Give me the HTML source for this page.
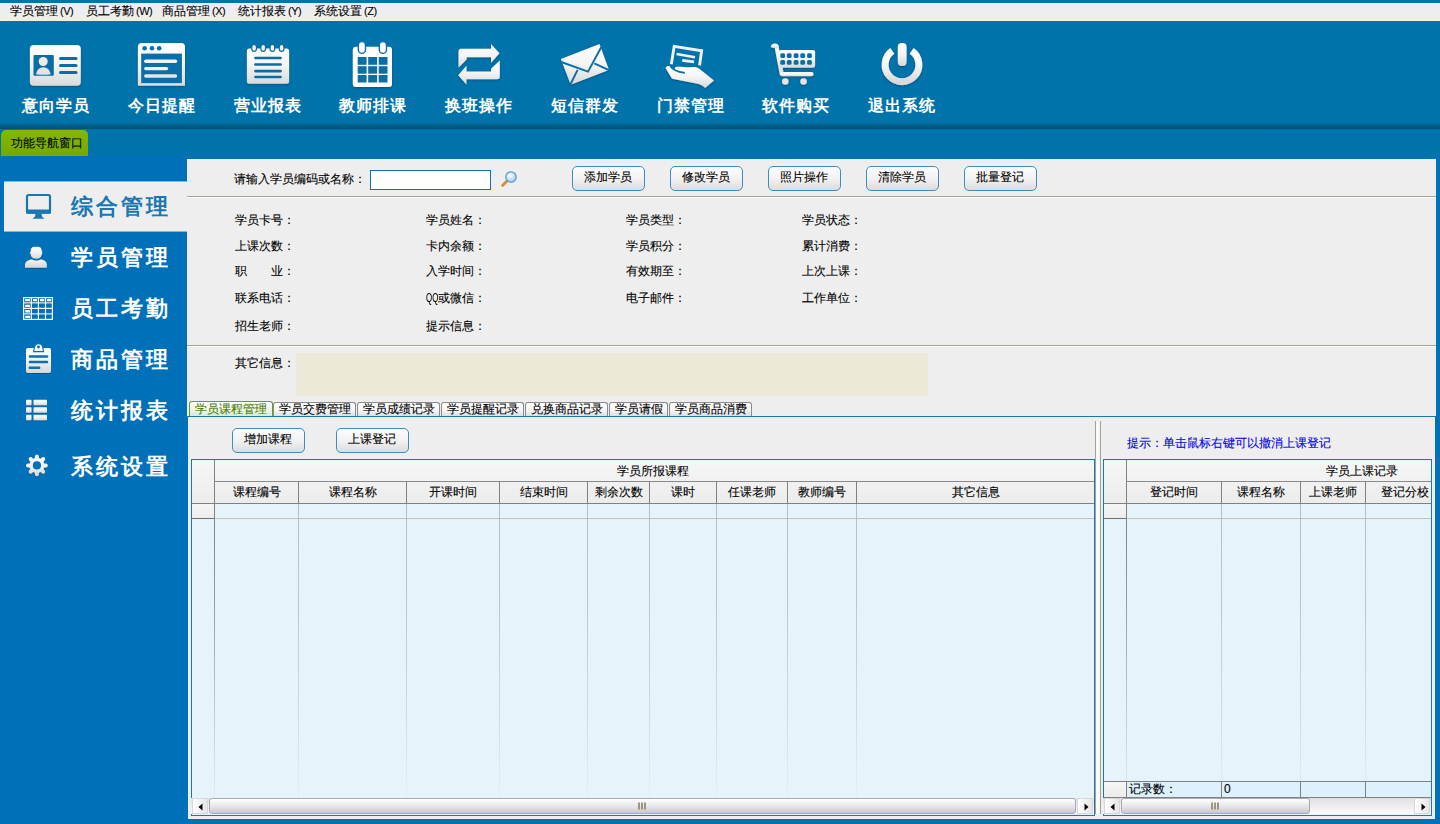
<!DOCTYPE html>
<html><head><meta charset="utf-8">
<style>
*{margin:0;padding:0;box-sizing:border-box}
html,body{width:1440px;height:824px;overflow:hidden}
body{position:relative;background:#0070b9;font-family:"Liberation Sans",sans-serif;font-size:12px;color:#000}
.a{position:absolute}
.t{position:absolute;white-space:nowrap;font-size:12px;line-height:12px;-webkit-text-stroke:0.1px currentColor}
#topbar{left:0;top:0;width:1440px;height:156px;background:#0073ab}
#menu{left:0;top:3px;width:1440px;height:18px;background:#eeeeee}
#shadow{left:0;top:122px;width:1440px;height:7px;background:linear-gradient(#0073ab 0px,#00628f 3px,#004e78 7px)}
.tb{position:absolute;top:0;height:124px}
.tbl{position:absolute;top:98px;white-space:nowrap;color:#fff;font-weight:bold;font-size:16px;line-height:16px;letter-spacing:1px}
#navtab{left:1px;top:130px;width:87px;height:26px;border-radius:5px 5px 0 0;background:linear-gradient(#82b900,#76a800)}
#content{left:187px;top:159px;width:1249px;height:660px;background:#eeeeee}
.sep{position:absolute;left:187px;width:1249px;height:2px;border-top:1px solid #a9a48f;border-bottom:1px solid #fff}
.btn{-webkit-text-stroke:0.1px #000;position:absolute;height:25px;border:1px solid #3b8ec2;border-radius:5px;background:linear-gradient(#fdfdfd,#f2f2f2 50%,#dcdcdc);text-align:center;line-height:20px;font-size:12px;text-indent:-2px}
.side{position:absolute;left:0;width:187px;height:51px}
.slbl{position:absolute;left:71px;white-space:nowrap;color:#fff;font-weight:bold;font-size:22px;line-height:22px;letter-spacing:3px}
.tab{-webkit-text-stroke:0.1px currentColor;position:absolute;top:402px;height:14px;border:1px solid #8c8c8c;border-bottom:none;border-radius:3px 3px 0 0;background:linear-gradient(#ffffff,#f4f4f4 60%,#dedede);font-size:12px;line-height:13px;text-align:center;white-space:nowrap}
.tab.act{top:401px;height:15px;border-color:#6a9a1e;color:#4b7a00;background:linear-gradient(#ffffff,#f0f8ec 50%,#d8ecd0);line-height:14px}
.hdr{background:linear-gradient(#f6f6f6,#ececec)}
.sb{background:linear-gradient(#e0e0e0,#f0f0f0 60%,#fafafa)}
.sbtn{background:linear-gradient(90deg,#ffffff,#e6e6e6);border:1px solid #d8d8d8}
.thumb{border:1px solid #a8a8b8;border-radius:3px;background:linear-gradient(#ffffff,#ececf0 40%,#c8c8d6)}
</style></head><body>
<div id="topbar" class="a"></div>
<div id="menu" class="a">
  <span class="t" style="left:10px;top:2px">学员管理<span style="margin-left:2px;font-size:11px;letter-spacing:-0.5px">(V)</span></span>
  <span class="t" style="left:86px;top:2px">员工考勤<span style="margin-left:2px;font-size:11px;letter-spacing:-0.5px">(W)</span></span>
  <span class="t" style="left:162px;top:2px">商品管理<span style="margin-left:2px;font-size:11px;letter-spacing:-0.5px">(X)</span></span>
  <span class="t" style="left:238px;top:2px">统计报表<span style="margin-left:2px;font-size:11px;letter-spacing:-0.5px">(Y)</span></span>
  <span class="t" style="left:314px;top:2px">系统设置<span style="margin-left:2px;font-size:11px;letter-spacing:-0.5px">(Z)</span></span>
</div>
<div id="shadow" class="a"></div>
<div id="navtab" class="a"><span class="t" style="left:10px;top:7px">功能导航窗口</span></div>

<svg class="a" style="left:0;top:0" width="1440" height="130">
<defs>
<linearGradient id="g1" x1="0" y1="0" x2="0" y2="1"><stop offset="0" stop-color="#ffffff"/><stop offset="0.5" stop-color="#f4f4f4"/><stop offset="1" stop-color="#d9d9d9"/></linearGradient>
<filter id="sh" x="-20%" y="-20%" width="140%" height="140%"><feDropShadow dx="0" dy="1" stdDeviation="0.8" flood-color="#003a5a" flood-opacity="0.6"/></filter>
</defs>
<g filter="url(#sh)">
<!-- ID card -->
<rect x="29.9" y="44.9" width="50.9" height="40.9" rx="3.8" fill="url(#g1)"/>
<!-- browser -->
<path d="M137.9,85.8 L137.9,47 Q137.9,42.9 142,42.9 L181,42.9 Q185,42.9 185,47 L185,85.8 Z" fill="url(#g1)"/>
<!-- notepad -->
<rect x="246.9" y="48.5" width="42.2" height="35.3" rx="2.5" fill="url(#g1)"/>
<!-- calendar -->
<rect x="352.8" y="46.8" width="39.2" height="40.2" rx="3" fill="#ffffff"/>
<!-- swap -->
<path d="M458.5,67.8 L458.5,51.3 Q458.5,48.8 461,48.8 L491,48.8 L491,43.9 L499.5,53.3 L491,62.9 L491,57.3 L466.7,57.3 L466.7,59.6 Z" fill="url(#g1)"/>
<path d="M499.8,60.6 L499.8,76.8 Q499.8,79.3 497.2,79.3 L466.5,79.3 L466.5,84.8 L458.2,75.3 L466.5,65.8 L466.5,71.4 L491,71.4 L491,68.8 Z" fill="url(#g1)"/>
<!-- envelope -->
<path d="M560.9,59 L599.5,43.9 L609,70.1 L570.7,84.8 Z" fill="url(#g1)"/>
<!-- hand -->
<path d="M665.5,68 C667,65.5 669.5,65.6 671.2,67.3 L675.2,66.9 C680,66.3 688,67.8 692,67.1 C695,66.6 697,67 699,68.5 L714,80.5 L705.2,88 C702.5,85.2 699.5,84 696,83.5 L672,78.8 Z" fill="url(#g1)"/>
<!-- cart -->
<path d="M774.2,45 L778.4,45 L784,75 L779.8,75 Z" fill="url(#g1)"/>
<path d="M770.8,47.2 C770.6,43.6 775,42.4 777.8,44.3 L778.6,48.2 L773.5,48 Z" fill="url(#g1)"/>
<rect x="779.1" y="50.1" width="36" height="17.7" rx="2" fill="url(#g1)"/>
<rect x="780" y="72" width="33.5" height="4.3" rx="2" fill="url(#g1)"/>
<circle cx="785.3" cy="81.5" r="3.3" fill="#e8e4e0"/>
<circle cx="803.6" cy="81.5" r="3.3" fill="#e8e4e0"/>
<!-- power -->
<path d="M892.3,50.9 A16.9,16.9 0 1 0 911.7,50.9" fill="none" stroke="url(#g1)" stroke-width="7"/>
<rect x="897.8" y="43" width="8.8" height="23" rx="4" fill="url(#g1)"/>
</g>
<!-- ID card details -->
<rect x="33.5" y="54.9" width="20.3" height="20.9" rx="1" fill="#0a6ea5"/>
<circle cx="43.2" cy="61.5" r="4.5" fill="#ececec"/>
<path d="M36,74.2 Q37.5,67.3 43.3,67.3 Q49,67.3 50.8,74.2 Q43.3,75.2 36,74.2 Z" fill="#e4e4e4"/>
<g stroke="#0a6ea5" stroke-width="3" stroke-linecap="round">
<line x1="60.5" y1="58.5" x2="76" y2="58.5"/><line x1="60.5" y1="65.5" x2="76" y2="65.5"/><line x1="60.5" y1="72.5" x2="76" y2="72.5"/>
</g>
<!-- browser details -->
<rect x="141.2" y="53.6" width="40.7" height="29.5" fill="#0a6fa6"/>
<circle cx="144.6" cy="48.2" r="2.3" fill="#0a6fa6"/><circle cx="152" cy="48.2" r="2.3" fill="#0a6fa6"/><circle cx="159.2" cy="48.2" r="2.3" fill="#0a6fa6"/>
<g stroke="#f2f2f2" stroke-width="3.4" stroke-linecap="round">
<line x1="145.8" y1="61.2" x2="175.5" y2="61.2"/><line x1="145.8" y1="68.6" x2="166.5" y2="68.6"/><line x1="145.8" y1="76" x2="175.5" y2="76" stroke="#e6e6e6"/>
</g>
<!-- notepad details -->
<g fill="#f6f6f6" stroke="#0a6ea5" stroke-width="1.2">
<rect x="251.8" y="44.4" width="4.6" height="7" rx="2.3"/><rect x="260.9" y="44.4" width="4.6" height="7" rx="2.3"/><rect x="270.1" y="44.4" width="4.6" height="7" rx="2.3"/><rect x="279.3" y="44.4" width="4.6" height="7" rx="2.3"/>
</g>
<g stroke="#0a6ea5" stroke-width="2.6" stroke-linecap="round">
<line x1="255.4" y1="58" x2="280.6" y2="58"/><line x1="255.4" y1="64.5" x2="280.6" y2="64.5"/><line x1="255.4" y1="71.1" x2="280.6" y2="71.1"/><line x1="255.4" y1="77" x2="280.6" y2="77"/>
</g>
<!-- calendar details -->
<g fill="#0a6fa6">
<rect x="357.7" y="57" width="8.9" height="7.8"/><rect x="368.2" y="57" width="8.9" height="7.8"/><rect x="378.7" y="57" width="8.8" height="7.8"/>
<rect x="357.7" y="66.2" width="8.9" height="7.5"/><rect x="368.2" y="66.2" width="8.9" height="7.5"/><rect x="378.7" y="66.2" width="8.8" height="7.5"/>
<rect x="357.7" y="75" width="8.9" height="7.5"/><rect x="368.2" y="75" width="8.9" height="7.5"/><rect x="378.7" y="75" width="8.8" height="7.5"/>
</g>
<g fill="#ffffff" stroke="#0a6fa6" stroke-width="1.4">
<rect x="358.3" y="41.6" width="7.2" height="11.8" rx="3.6"/><rect x="379.3" y="41.6" width="7.2" height="11.8" rx="3.6"/>
</g>
<!-- envelope lines -->
<g stroke="#0a6fa6" stroke-width="1.9" fill="none" stroke-linejoin="miter">
<path d="M561.2,62 L588,71.6 L601.2,47.2"/>
<path d="M577.6,69.8 L570.2,85"/>
<path d="M594.3,63.3 L609.5,70.3"/>
</g>
<!-- hand card -->
<path d="M671.3,64.2 L674.2,46.3 L701.6,50.8 L699.6,65.4" fill="none" stroke="#f2f2f2" stroke-width="2.9" stroke-linejoin="miter"/>
<g stroke="#f2f2f2" stroke-linecap="butt">
<line x1="676.6" y1="54" x2="695" y2="57.2" stroke-width="2.4"/>
<line x1="682.2" y1="60.3" x2="694" y2="61.9" stroke-width="2.8"/>
</g>
<path d="M670.6,66.4 Q673.2,71.2 684.8,72.9" fill="none" stroke="#0a6fa6" stroke-width="1.9"/><path d="M669.6,65.6 L676,66.2 L674.2,69.6 Z" fill="#0a6fa6"/>
<!-- cart holes -->
<g fill="#0a6fa6">
<rect x="780.3" y="53.2" width="4.8" height="4.7" rx="1.5"/><rect x="786.8" y="53.2" width="4.8" height="4.7" rx="1.5"/><rect x="793.7" y="53.2" width="4.8" height="4.7" rx="1.5"/><rect x="800.3" y="53.2" width="4.8" height="4.7" rx="1.5"/><rect x="807.1" y="53.2" width="4.8" height="4.7" rx="1.5"/><rect x="780.3" y="60.1" width="4.8" height="4.7" rx="1.5"/><rect x="786.8" y="60.1" width="4.8" height="4.7" rx="1.5"/><rect x="793.7" y="60.1" width="4.8" height="4.7" rx="1.5"/><rect x="800.3" y="60.1" width="4.8" height="4.7" rx="1.5"/><rect x="807.1" y="60.1" width="4.8" height="4.7" rx="1.5"/>
</g>
</svg>
<!-- toolbar labels -->
<span class="tbl" style="left:22px">意向学员</span>
<span class="tbl" style="left:128px">今日提醒</span>
<span class="tbl" style="left:234px">营业报表</span>
<span class="tbl" style="left:339px">教师排课</span>
<span class="tbl" style="left:445px">换班操作</span>
<span class="tbl" style="left:551px">短信群发</span>
<span class="tbl" style="left:657px">门禁管理</span>
<span class="tbl" style="left:762px">软件购买</span>
<span class="tbl" style="left:868px">退出系统</span>

<div id="content" class="a"></div>

<!-- sidebar -->
<div class="side" style="top:181px;left:4px;width:183px;height:51px;background:#eeeeee;border-top:1px solid #b8ab8a;border-bottom:1px solid #b8ab8a"></div>

<svg class="a" style="left:0;top:156px" width="187" height="340">
<defs>
<linearGradient id="g2" x1="0" y1="0" x2="0" y2="1"><stop offset="0" stop-color="#ffffff"/><stop offset="0.5" stop-color="#f2f2f2"/><stop offset="1" stop-color="#d6d6d6"/></linearGradient>
<linearGradient id="g3" gradientUnits="userSpaceOnUse" x1="0" y1="-11" x2="0" y2="11"><stop offset="0" stop-color="#ffffff"/><stop offset="0.5" stop-color="#f0f0f0"/><stop offset="1" stop-color="#d8d8d8"/></linearGradient>
<linearGradient id="g4" x1="0" y1="0" x2="0" y2="1"><stop offset="0" stop-color="#f6f6f6"/><stop offset="1" stop-color="#d4d4d4"/></linearGradient>
<filter id="sh2" x="-20%" y="-20%" width="140%" height="140%"><feDropShadow dx="0" dy="1" stdDeviation="0.6" flood-color="#003a5a" flood-opacity="0.5"/></filter>
</defs>
<g transform="translate(0,-156)">
<!-- monitor -->
<rect x="27" y="195" width="23" height="17.6" rx="1.5" fill="none" stroke="#1a77b0" stroke-width="2.2"/>
<rect x="26" y="209.5" width="25" height="4.2" rx="1" fill="#1a77b0"/>
<path d="M35.5,213.5 L41.5,213.5 L42,216.5 L44.5,218.8 L32.5,218.8 L35,216.5 Z" fill="#1a77b0"/>
<g filter="url(#sh2)">
<!-- person -->

<path d="M25,267.8 L25,264.2 Q25.4,261.6 28,260.6 L31.4,259.3 Q36.2,262.2 41.2,259.3 L44.2,260.6 Q46.8,261.7 46.8,264.2 L46.8,267.8 Z" fill="url(#g4)"/><path d="M30.5,249.2 Q31,246.2 36.2,246.2 Q41.4,246.2 41.9,249.2 L42.3,251.5 Q43.3,252.8 42.3,254.2 Q41.5,259.2 36.2,259.2 Q30.9,259.2 30.1,254.2 Q29.1,252.8 30.1,251.5 Z" fill="url(#g2)" stroke="#0070b9" stroke-width="0.9"/>
<!-- clipboard -->
<rect x="26" y="348" width="25" height="25" rx="2" fill="url(#g2)"/>
<!-- list -->
<rect x="26" y="399.7" width="5.5" height="5.5" rx="0.8" fill="url(#g2)"/>
<rect x="26" y="407.2" width="5.5" height="5.5" rx="0.8" fill="url(#g2)"/>
<rect x="26" y="414.7" width="5.5" height="5.5" rx="0.8" fill="url(#g2)"/>
<rect x="33.5" y="399.7" width="13.5" height="5.5" rx="0.8" fill="url(#g2)"/>
<rect x="33.5" y="407.2" width="13.5" height="5.5" rx="0.8" fill="url(#g2)"/>
<rect x="33.5" y="414.7" width="13.5" height="5.5" rx="0.8" fill="url(#g2)"/>
<!-- gear -->
<path d="M29.20,465.40 A7.7,7.7 0 1 1 44.60,465.40 A7.7,7.7 0 1 1 29.20,465.40 Z M34.90,460.40 L34.90,456.50 L38.90,456.50 L38.90,460.40 Z M34.90,456.50 A2.0,2.0 0 1 1 38.90,456.50 A2.0,2.0 0 1 1 34.90,456.50 Z M39.02,460.45 L41.78,457.69 L44.61,460.52 L41.85,463.28 Z M41.19,459.11 A2.0,2.0 0 1 1 45.19,459.11 A2.0,2.0 0 1 1 41.19,459.11 Z M41.90,463.40 L45.80,463.40 L45.80,467.40 L41.90,467.40 Z M43.80,465.40 A2.0,2.0 0 1 1 47.80,465.40 A2.0,2.0 0 1 1 43.80,465.40 Z M41.85,467.52 L44.61,470.28 L41.78,473.11 L39.02,470.35 Z M41.19,471.69 A2.0,2.0 0 1 1 45.19,471.69 A2.0,2.0 0 1 1 41.19,471.69 Z M38.90,470.40 L38.90,474.30 L34.90,474.30 L34.90,470.40 Z M34.90,474.30 A2.0,2.0 0 1 1 38.90,474.30 A2.0,2.0 0 1 1 34.90,474.30 Z M34.78,470.35 L32.02,473.11 L29.19,470.28 L31.95,467.52 Z M28.61,471.69 A2.0,2.0 0 1 1 32.61,471.69 A2.0,2.0 0 1 1 28.61,471.69 Z M31.90,467.40 L28.00,467.40 L28.00,463.40 L31.90,463.40 Z M26.00,465.40 A2.0,2.0 0 1 1 30.00,465.40 A2.0,2.0 0 1 1 26.00,465.40 Z M31.95,463.28 L29.19,460.52 L32.02,457.69 L34.78,460.45 Z M28.61,459.11 A2.0,2.0 0 1 1 32.61,459.11 A2.0,2.0 0 1 1 28.61,459.11 Z" fill="url(#g2)"/>
</g>
<!-- clipboard details -->
<path d="M33.6,351.6 L34.6,346.6 Q35.3,343.8 38.6,343.8 Q41.9,343.8 42.6,346.6 L43.6,351.6 Z" fill="#f6f6f6" stroke="#0a6fb5" stroke-width="1.1"/>
<circle cx="38.5" cy="347" r="1.4" fill="#0a6fb5"/>
<g stroke="#0a6fb5" stroke-width="2.5" stroke-linecap="round">
<line x1="30" y1="356.5" x2="47" y2="356.5"/><line x1="30" y1="362" x2="47" y2="362"/><line x1="29.8" y1="367.8" x2="39.2" y2="367.8"/>
</g>
<circle cx="36.9" cy="465.4" r="4.1" fill="#0070b9"/>
<!-- table grid -->
<g fill="#a9cbe0">
<rect x="23.6" y="302" width="28.8" height="1.6"/><rect x="23.6" y="313" width="28.8" height="1.6"/>
</g>
<g fill="none" stroke="#ffffff" stroke-width="1.2">
<rect x="23.6" y="297.6" width="28.8" height="21.8"/>
<line x1="31.3" y1="297.6" x2="31.3" y2="319.4"/><line x1="38.4" y1="297.6" x2="38.4" y2="319.4"/><line x1="45.5" y1="297.6" x2="45.5" y2="319.4"/>
<line x1="23.6" y1="308.4" x2="52.4" y2="308.4"/>
</g>
<g fill="#ffffff">
<rect x="25.2" y="299" width="4.8" height="2.3" rx="0.5"/><rect x="33" y="299" width="4" height="2.3" rx="0.5"/><rect x="40" y="299" width="4.2" height="2.3" rx="0.5"/><rect x="47" y="299" width="4" height="2.3" rx="0.5"/>
<rect x="25.2" y="304.8" width="4.8" height="2.3" rx="0.5"/>
<rect x="25.2" y="310.1" width="4.8" height="2.3" rx="0.5"/><rect x="25.2" y="315.8" width="4.8" height="2.3" rx="0.5"/>
</g>
</g>
</svg>
<span class="slbl" style="top:196px;color:#1a77b0">综合管理</span>
<span class="slbl" style="top:247px">学员管理</span>
<span class="slbl" style="top:298px">员工考勤</span>
<span class="slbl" style="top:349px">商品管理</span>
<span class="slbl" style="top:400px">统计报表</span>
<span class="slbl" style="top:456px">系统设置</span>

<!-- search row -->
<span class="t" style="left:234px;top:173px">请输入学员编码或名称：</span>
<div class="a" style="left:370px;top:170px;width:121px;height:20px;background:#fff;border:1px solid #0b72aa"></div>
<div class="btn" style="left:572px;top:166px;width:73px">添加学员</div>
<div class="btn" style="left:670px;top:166px;width:73px">修改学员</div>
<div class="btn" style="left:768px;top:166px;width:73px">照片操作</div>
<div class="btn" style="left:866px;top:166px;width:73px">清除学员</div>
<div class="btn" style="left:964px;top:166px;width:73px">批量登记</div>
<div class="sep" style="top:196px"></div>


<!-- info -->
<span class="t" style="left:235px;top:214px">学员卡号：</span>
<span class="t" style="left:426px;top:214px">学员姓名：</span>
<span class="t" style="left:626px;top:214px">学员类型：</span>
<span class="t" style="left:802px;top:214px">学员状态：</span>
<span class="t" style="left:235px;top:240px">上课次数：</span>
<span class="t" style="left:426px;top:240px">卡内余额：</span>
<span class="t" style="left:626px;top:240px">学员积分：</span>
<span class="t" style="left:802px;top:240px">累计消费：</span>
<span class="t" style="left:235px;top:265px">职&#12288;&#12288;业：</span>
<span class="t" style="left:426px;top:265px">入学时间：</span>
<span class="t" style="left:626px;top:265px">有效期至：</span>
<span class="t" style="left:802px;top:265px">上次上课：</span>
<span class="t" style="left:235px;top:292px">联系电话：</span>
<span class="t" style="left:426px;top:292px"><span style="display:inline-block;width:12px;transform:scaleX(0.66);transform-origin:0 0">QQ</span>或微信：</span>
<span class="t" style="left:626px;top:292px">电子邮件：</span>
<span class="t" style="left:802px;top:292px">工作单位：</span>
<span class="t" style="left:235px;top:320px">招生老师：</span>
<span class="t" style="left:426px;top:320px">提示信息：</span>
<div class="sep" style="top:345px"></div>
<span class="t" style="left:235px;top:357px">其它信息：</span>
<div class="a" style="left:296px;top:353px;width:632px;height:43px;background:#ece9d8"></div>
<svg class="a" style="left:498px;top:168px" width="22" height="22">
<defs><radialGradient id="lens" cx="0.4" cy="0.35" r="0.7"><stop offset="0" stop-color="#ffffff"/><stop offset="1" stop-color="#9cc8ee"/></radialGradient></defs>
<line x1="4.5" y1="17.5" x2="9.5" y2="12.5" stroke="#d9892a" stroke-width="2.6" stroke-linecap="round"/>
<circle cx="13" cy="9" r="5.2" fill="url(#lens)" stroke="#5b9bd0" stroke-width="1.3"/>
</svg>
<div class="tab act" style="left:189px;width:84px">学员课程管理</div>
<div class="tab" style="left:273px;width:83px">学员交费管理</div>
<div class="tab" style="left:357px;width:83px">学员成绩记录</div>
<div class="tab" style="left:441px;width:83px">学员提醒记录</div>
<div class="tab" style="left:525px;width:83px">兑换商品记录</div>
<div class="tab" style="left:609px;width:59px">学员请假</div>
<div class="tab" style="left:669px;width:83px">学员商品消费</div>

<div class="a" style="left:187px;top:416px;width:1249px;height:1px;background:#1877b5"></div>
<div class="a" style="left:1435px;top:417px;width:1px;height:402px;background:#0070b9"></div>
<div class="a" style="left:187px;top:417px;width:1px;height:402px;background:#0070b9"></div>
<!-- lower -->
<div class="btn" style="left:232px;top:428px;width:73px;height:25px">增加课程</div>
<div class="btn" style="left:336px;top:428px;width:73px;height:25px">上课登记</div>
<span class="t" style="left:1127px;top:437px;color:#0000ee">提示：单击鼠标右键可以撤消上课登记</span>
<div class="a" style="left:1095px;top:421px;width:6px;height:393px;border-left:1px solid #a7a393;border-right:1px solid #a7a393;background:linear-gradient(90deg,#f6f6f6,#ffffff,#eeeeee)"></div>
<div class="a" style="left:191px;top:459px;width:904px;height:357px;border:1px solid #1679b4;background:#e6f3fa"></div>
<div class="a hdr" style="left:192px;top:461px;width:902px;height:42px"></div>
<div class="a" style="left:214px;top:460px;width:1px;height:338px;background:linear-gradient(#808080,#808080 44px,#9a9a9a 140px,#c4ccd0 250px,#e0ecf2 337px)"></div>
<div class="a" style="left:214px;top:481px;width:880px;height:1px;background:#8a8a8a"></div>
<div class="a" style="left:192px;top:503px;width:902px;height:1px;background:#808080"></div>
<div class="a hdr" style="left:192px;top:504px;width:22px;height:14px"></div>
<div class="a" style="left:192px;top:518px;width:22px;height:1px;background:#707070"></div>
<div class="a" style="left:215px;top:518px;width:879px;height:1px;background:#c0c0c0"></div>
<div class="a" style="left:298px;top:482px;width:1px;height:21px;background:#808080"></div>
<div class="a" style="left:298px;top:504px;width:1px;height:294px;background:linear-gradient(#bcbcbc,#c4c4c4 100px,#d2d8db 200px,#e3eff5 294px)"></div>
<div class="a" style="left:406px;top:482px;width:1px;height:21px;background:#808080"></div>
<div class="a" style="left:406px;top:504px;width:1px;height:294px;background:linear-gradient(#bcbcbc,#c4c4c4 100px,#d2d8db 200px,#e3eff5 294px)"></div>
<div class="a" style="left:499px;top:482px;width:1px;height:21px;background:#808080"></div>
<div class="a" style="left:499px;top:504px;width:1px;height:294px;background:linear-gradient(#bcbcbc,#c4c4c4 100px,#d2d8db 200px,#e3eff5 294px)"></div>
<div class="a" style="left:587px;top:482px;width:1px;height:21px;background:#808080"></div>
<div class="a" style="left:587px;top:504px;width:1px;height:294px;background:linear-gradient(#bcbcbc,#c4c4c4 100px,#d2d8db 200px,#e3eff5 294px)"></div>
<div class="a" style="left:649px;top:482px;width:1px;height:21px;background:#808080"></div>
<div class="a" style="left:649px;top:504px;width:1px;height:294px;background:linear-gradient(#bcbcbc,#c4c4c4 100px,#d2d8db 200px,#e3eff5 294px)"></div>
<div class="a" style="left:716px;top:482px;width:1px;height:21px;background:#808080"></div>
<div class="a" style="left:716px;top:504px;width:1px;height:294px;background:linear-gradient(#bcbcbc,#c4c4c4 100px,#d2d8db 200px,#e3eff5 294px)"></div>
<div class="a" style="left:787px;top:482px;width:1px;height:21px;background:#808080"></div>
<div class="a" style="left:787px;top:504px;width:1px;height:294px;background:linear-gradient(#bcbcbc,#c4c4c4 100px,#d2d8db 200px,#e3eff5 294px)"></div>
<div class="a" style="left:856px;top:482px;width:1px;height:21px;background:#808080"></div>
<div class="a" style="left:856px;top:504px;width:1px;height:294px;background:linear-gradient(#bcbcbc,#c4c4c4 100px,#d2d8db 200px,#e3eff5 294px)"></div>
<span class="t" style="left:215px;top:486px;width:83px;text-align:center;overflow:hidden">课程编号</span>
<span class="t" style="left:299px;top:486px;width:107px;text-align:center;overflow:hidden">课程名称</span>
<span class="t" style="left:407px;top:486px;width:92px;text-align:center;overflow:hidden">开课时间</span>
<span class="t" style="left:500px;top:486px;width:87px;text-align:center;overflow:hidden">结束时间</span>
<span class="t" style="left:588px;top:486px;width:61px;text-align:center;overflow:hidden">剩余次数</span>
<span class="t" style="left:650px;top:486px;width:66px;text-align:center;overflow:hidden">课时</span>
<span class="t" style="left:717px;top:486px;width:70px;text-align:center;overflow:hidden">任课老师</span>
<span class="t" style="left:788px;top:486px;width:68px;text-align:center;overflow:hidden">教师编号</span>
<span class="t" style="left:857px;top:486px;width:237px;text-align:center;overflow:hidden">其它信息</span>
<span class="t" style="left:617px;top:465px">学员所报课程</span>
<div class="a" style="left:1103px;top:459px;width:329px;height:357px;border:1px solid #1679b4;background:#e6f3fa"></div>
<div class="a hdr" style="left:1104px;top:461px;width:327px;height:42px"></div>
<div class="a" style="left:1126px;top:460px;width:1px;height:338px;background:linear-gradient(#808080,#808080 44px,#9a9a9a 140px,#c4ccd0 250px,#e0ecf2 337px)"></div>
<div class="a" style="left:1126px;top:481px;width:305px;height:1px;background:#8a8a8a"></div>
<div class="a" style="left:1104px;top:503px;width:327px;height:1px;background:#808080"></div>
<div class="a hdr" style="left:1104px;top:504px;width:22px;height:14px"></div>
<div class="a" style="left:1104px;top:518px;width:22px;height:1px;background:#707070"></div>
<div class="a" style="left:1127px;top:518px;width:304px;height:1px;background:#c0c0c0"></div>
<div class="a" style="left:1221px;top:482px;width:1px;height:21px;background:#808080"></div>
<div class="a" style="left:1221px;top:504px;width:1px;height:294px;background:linear-gradient(#bcbcbc,#c4c4c4 100px,#d2d8db 200px,#e3eff5 294px)"></div>
<div class="a" style="left:1300px;top:482px;width:1px;height:21px;background:#808080"></div>
<div class="a" style="left:1300px;top:504px;width:1px;height:294px;background:linear-gradient(#bcbcbc,#c4c4c4 100px,#d2d8db 200px,#e3eff5 294px)"></div>
<div class="a" style="left:1365px;top:482px;width:1px;height:21px;background:#808080"></div>
<div class="a" style="left:1365px;top:504px;width:1px;height:294px;background:linear-gradient(#bcbcbc,#c4c4c4 100px,#d2d8db 200px,#e3eff5 294px)"></div>
<span class="t" style="left:1127px;top:486px;width:94px;text-align:center;overflow:hidden">登记时间</span>
<span class="t" style="left:1222px;top:486px;width:78px;text-align:center;overflow:hidden">课程名称</span>
<span class="t" style="left:1301px;top:486px;width:64px;text-align:center;overflow:hidden">上课老师</span>
<div class="a" style="left:1366px;top:482px;width:65px;height:21px;overflow:hidden"><span class="t" style="left:15px;top:4px">登记分校</span></div>
<span class="t" style="left:1326px;top:465px">学员上课记录</span>
<div class="a" style="left:1104px;top:781px;width:1327px;height:1px"></div>
<div class="a" style="left:1104px;top:781px;width:327px;height:17px;background:#dcf1fc;border-top:1px solid #808080;border-bottom:1px solid #808080"></div>
<div class="a hdr" style="left:1104px;top:782px;width:22px;height:15px"></div>
<div class="a" style="left:1126px;top:782px;width:1px;height:15px;background:#808080"></div>
<div class="a" style="left:1221px;top:782px;width:1px;height:15px;background:#808080"></div>
<div class="a" style="left:1365px;top:782px;width:1px;height:15px;background:#808080"></div>
<div class="a" style="left:1300px;top:782px;width:1px;height:15px;background:#808080"></div>
<span class="t" style="left:1129px;top:783px">记录数：</span>
<span class="t" style="left:1224px;top:783px">0</span>
<div class="a sb" style="left:191px;top:798px;width:903px;height:16px"></div>
<div class="a sbtn" style="left:192px;top:798px;width:16px;height:16px"><svg width="16" height="16"><path d="M5.5,8 L9.5,4.5 L9.5,11.5 Z" fill="#000"/></svg></div>
<div class="a sbtn" style="left:1077px;top:798px;width:16px;height:16px"><svg width="16" height="16"><path d="M10.5,8 L6.5,4.5 L6.5,11.5 Z" fill="#000"/></svg></div>
<div class="a thumb" style="left:209px;top:798px;width:867px;height:16px"></div>
<svg class="a" style="left:638px;top:802px" width="8" height="8"><g stroke="#8f7f5f" stroke-width="1.6"><line x1="1" y1="0.5" x2="1" y2="7.5"/><line x1="4" y1="0.5" x2="4" y2="7.5"/><line x1="7" y1="0.5" x2="7" y2="7.5"/></g></svg>
<div class="a sb" style="left:1103px;top:798px;width:328px;height:16px"></div>
<div class="a sbtn" style="left:1104px;top:798px;width:16px;height:16px"><svg width="16" height="16"><path d="M5.5,8 L9.5,4.5 L9.5,11.5 Z" fill="#000"/></svg></div>
<div class="a sbtn" style="left:1414px;top:798px;width:16px;height:16px"><svg width="16" height="16"><path d="M10.5,8 L6.5,4.5 L6.5,11.5 Z" fill="#000"/></svg></div>
<div class="a thumb" style="left:1121px;top:798px;width:189px;height:16px"></div>
<svg class="a" style="left:1211px;top:802px" width="8" height="8"><g stroke="#8f7f5f" stroke-width="1.6"><line x1="1" y1="0.5" x2="1" y2="7.5"/><line x1="4" y1="0.5" x2="4" y2="7.5"/><line x1="7" y1="0.5" x2="7" y2="7.5"/></g></svg>
</body></html>
